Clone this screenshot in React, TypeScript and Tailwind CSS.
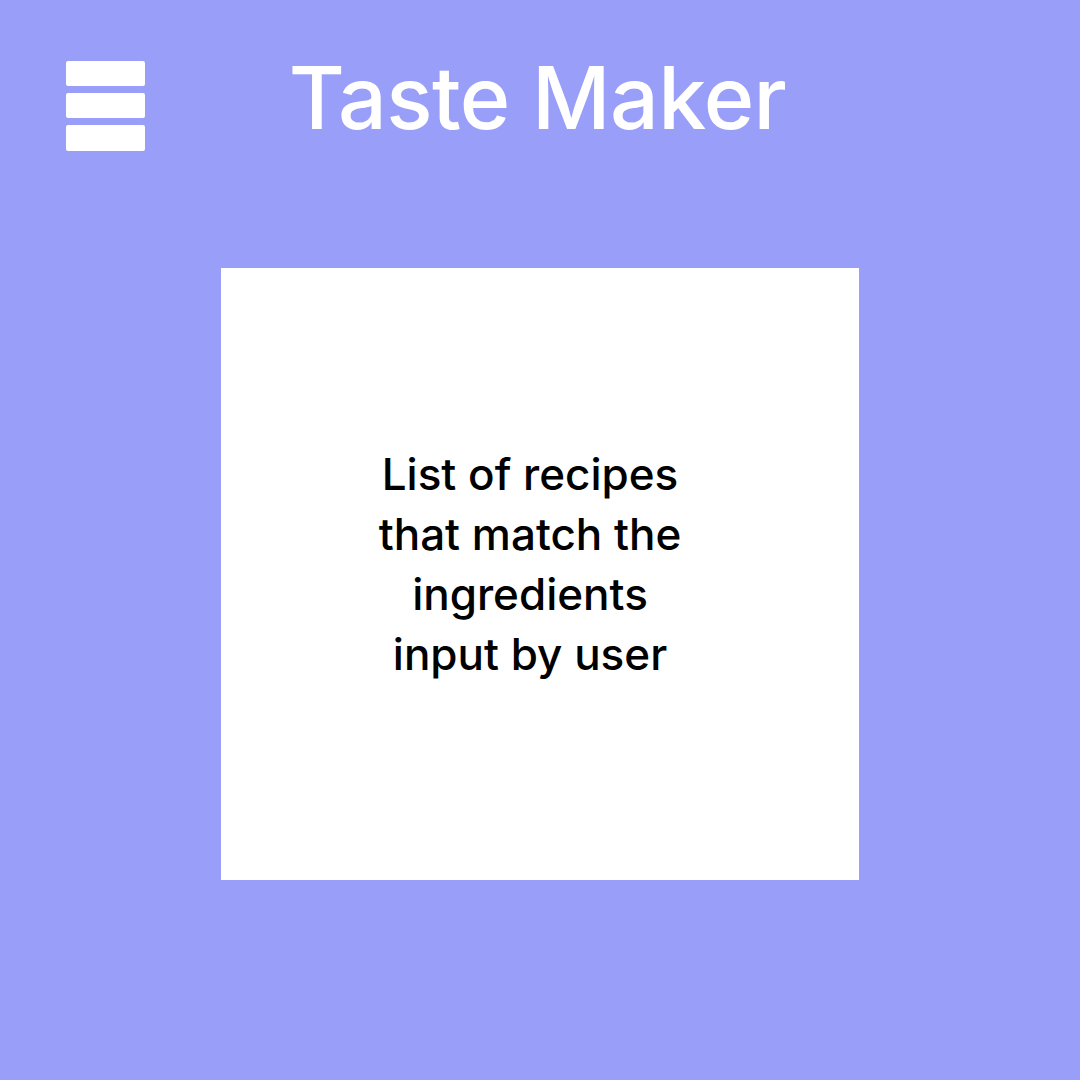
export default function App() {
    return (
        <div
            className="w-[1080px] h-[1080px] bg-[#999ef8] flex flex-col"
            style={{ fontFamily: "Inter, 'Noto Sans', sans-serif" }}
        >
            <header className="grid grid-cols-[1fr_auto_1fr] items-center px-[66px] pt-[45px]">
                <div className="flex flex-col gap-[7px] w-[79px] pt-[16px]">
                    <div className="h-[25px] bg-white rounded-[2px]" />
                    <div className="h-[25px] bg-white rounded-[2px]" />
                    <div className="h-[26px] bg-white rounded-[2px]" />
                </div>
                <h1 className="text-white text-[86px] font-medium leading-[100px] tracking-[-0.6px] -ml-[5px]">
                    Taste Maker
                </h1>
                <div />
            </header>

            <main className="flex justify-center pt-[117px]">
                <div className="w-[638px] h-[612px] bg-white flex items-center justify-center pb-[20px] pr-[20px]">
                    <p className="text-black text-[44px] font-medium leading-[60px] text-center">
                        List of recipes
                        <br />
                        that match the
                        <br />
                        ingredients
                        <br />
                        input by user
                    </p>
                </div>
            </main>
        </div>
    );
}
